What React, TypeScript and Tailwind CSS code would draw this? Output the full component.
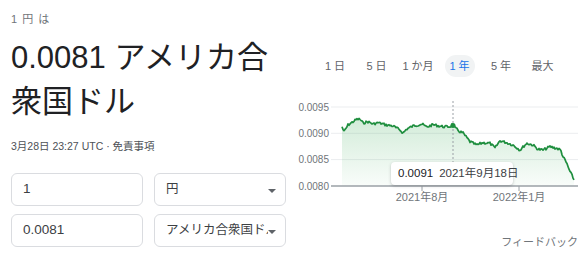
const font = "font-['Liberation_Sans','Noto_Sans_CJK_JP',sans-serif]";

// key points of the 1-year line, in page pixels
const keys: [number, number][] = [
  [342, 126.7], [344, 131.7], [348, 125], [356.7, 119.3], [360, 119.3], [363, 123],
  [368, 121.7], [373, 124], [378, 122.7], [386.7, 125], [393, 126], [400, 130],
  [403, 133], [406.7, 129], [413, 126], [421.7, 124], [426.7, 127], [433, 124.7],
  [443, 126.7], [450, 126.7], [452.7, 124], [455, 128], [460, 131.7], [463, 133],
  [470, 141.7], [476.7, 145], [483, 142.7], [490, 143.3], [495, 148], [500, 140.7],
  [506.7, 142.7], [513, 145], [520, 150], [526.7, 143.3], [533, 145], [538, 149.3],
  [543, 150], [550, 146.7], [556.7, 148.3], [560.7, 150], [563, 156.7], [566.7, 163.3],
  [570, 171.7], [572.7, 176.7], [574, 180],
];

const OX = 296;
const OY = 95;

function buildLine() {
  let seed = 7;
  const rnd = () => {
    seed = (seed * 9301 + 49297) % 233280;
    return seed / 233280;
  };
  const pts: [number, number][] = [];
  for (let x = keys[0][0]; x <= keys[keys.length - 1][0]; x += 1) {
    let i = 0;
    while (i < keys.length - 2 && keys[i + 1][0] < x) i++;
    const [x0, y0] = keys[i];
    const [x1, y1] = keys[i + 1];
    const t = Math.min(1, Math.max(0, (x - x0) / (x1 - x0)));
    const y = y0 + (y1 - y0) * t + (rnd() - 0.5) * 2.6;
    pts.push([x - OX, y - OY]);
  }
  return pts;
}

const line = buildLine();
const linePath = line.map((p, i) => `${i ? "L" : "M"}${p[0].toFixed(1)} ${p[1].toFixed(1)}`).join(" ");
const areaPath = `${linePath} L${line[line.length - 1][0].toFixed(1)} 91 L${line[0][0].toFixed(1)} 91 Z`;

const grid = [
  { label: "0.0095", y: 12 },
  { label: "0.0090", y: 38.3 },
  { label: "0.0085", y: 64.6 },
];

const ranges = ["1 日", "5 日", "1 か月", "1 年", "5 年", "最大"];

const Caret = () => (
  <svg width="8" height="4" viewBox="0 0 8 4" className="absolute right-[9px] top-[15px]">
    <path d="M0 0h8L4 4z" fill="#5f6368" />
  </svg>
);

const Field = ({ children, select }: { children: React.ReactNode; select?: boolean }) => (
  <div className="relative h-[33px] w-[132px] rounded-[6px] border border-[#dadce0] bg-white">
    <div className={`h-full flex items-center pl-[11px] ${select ? "pr-[17px]" : "pr-[11px]"}`}>
      <span
        className={`min-w-0 flex-1 overflow-hidden whitespace-nowrap text-[#3c4043] ${
          select ? "text-[12.5px]" : "text-[13.5px]"
        }`}
      >
        {children}
      </span>
    </div>
    {select && <Caret />}
  </div>
);

const Chart = () => (
  <div className="relative mt-[18px] h-[112px] w-[290px]">
    <svg width="290" height="112" viewBox="0 0 290 112">
      <defs>
        <linearGradient id="fill" x1="0" y1="0" x2="0" y2="1">
          <stop offset="0" stopColor="#34a853" stopOpacity="0.22" />
          <stop offset="1" stopColor="#34a853" stopOpacity="0.03" />
        </linearGradient>
      </defs>
      {grid.map((g) => (
        <g key={g.label}>
          <line x1="35" x2="282" y1={g.y} y2={g.y} stroke="#ebedef" strokeWidth="1" />
          <text x="33" y={g.y + 3.5} textAnchor="end" fontSize="10" fill="#70757a" fontFamily="Liberation Sans, sans-serif">
            {g.label}
          </text>
        </g>
      ))}
      <path d={areaPath} fill="url(#fill)" />
      <line x1="157" x2="157" y1="6" y2="67" stroke="#9aa0a6" strokeWidth="1" strokeDasharray="2 2" />
      <path d={linePath} fill="none" stroke="#1e8e3e" strokeWidth="1.7" strokeLinejoin="round" />
      <circle cx="157" cy="30.5" r="2.5" fill="#1e8e3e" />
      <line x1="35" x2="282" y1="91" y2="91" stroke="#9aa0a6" strokeWidth="1.3" />
      <text x="33" y="94.5" textAnchor="end" fontSize="10" fill="#70757a" fontFamily="Liberation Sans, sans-serif">
        0.0080
      </text>
      <line x1="126" x2="126" y1="91" y2="96" stroke="#9aa0a6" />
      <line x1="223" x2="223" y1="91" y2="96" stroke="#9aa0a6" />
      <text x="126" y="106" textAnchor="middle" fontSize="11" fill="#70757a" fontFamily="Liberation Sans, Noto Sans CJK JP, sans-serif">
        2021年8月
      </text>
      <text x="223" y="106" textAnchor="middle" fontSize="11" fill="#70757a" fontFamily="Liberation Sans, Noto Sans CJK JP, sans-serif">
        2022年1月
      </text>
    </svg>
    <div className="absolute left-[95px] top-[67px] h-[23px] w-[122px] flex items-center gap-[6px] pl-[7px] rounded-[4px] bg-white shadow-[0_1px_3px_rgba(60,64,67,0.3)] text-[11.5px] whitespace-nowrap">
      <span className="text-[#202124] font-medium">0.0091</span>
      <span className="text-[#3c4043]">2021年9月18日</span>
    </div>
  </div>
);

export default function App() {
  return (
    <div className={`${font} flex w-[586px] h-[254px] bg-white overflow-hidden`}>
      <div className="w-[296px] pl-[11px] pt-[11px] flex flex-col">
        <div className="text-[11px] leading-[16px] text-[#70757a] tracking-[1px]">1 円 は</div>
        <div className="mt-[8.5px] text-[31px] leading-[44px] text-[#202124]">
          0.0081 アメリカ合
          <br />
          衆国ドル
        </div>
        <div className="mt-[14.5px] text-[10.5px] leading-[16px] text-[#4d5156]">3月28日 23:27 UTC · 免責事項</div>
        <div className="mt-[19px] flex flex-col gap-[8px]">
          <div className="flex gap-[11px]">
            <Field>1</Field>
            <Field select>円</Field>
          </div>
          <div className="flex gap-[11px]">
            <Field>0.0081</Field>
            <Field select>アメリカ合衆国ドル</Field>
          </div>
        </div>
      </div>
      <div className="flex-1 pt-[55px] flex flex-col">
        <div className="flex gap-[11.5px] pl-[24px]">
          {ranges.map((r) => (
            <div
              key={r}
              className={`w-[30px] h-[22px] flex items-center justify-center rounded-full text-[11px] whitespace-nowrap ${
                r === "1 年" ? "bg-[#f1f3f4] text-[#1a73e8]" : "text-[#5f6368]"
              }`}
            >
              {r}
            </div>
          ))}
        </div>
        <Chart />
        <div className="mt-[27px] flex justify-end pr-[8px] text-[11px] leading-[16px] text-[#70757a]">フィードバック</div>
      </div>
    </div>
  );
}
